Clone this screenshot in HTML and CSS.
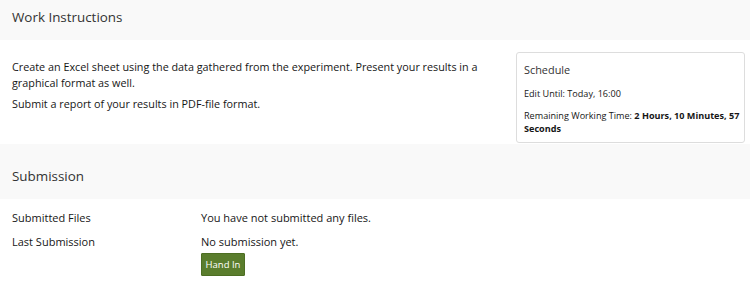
FILE: index.html
```html
<!DOCTYPE html>
<html lang="en">

<head>
    <meta charset="UTF-8">
    <title>Exercise</title>
    <link rel="stylesheet" href="styles.css">
</head>

<body>
    <section class="panel">
        <h2 class="panel-title">Work Instructions</h2>
        <div class="panel-body instructions">
            <div class="instructions-text">
                <p>Create an Excel sheet using the data gathered from the experiment. Present your results in a graphical format as well.</p>
                <p>Submit a report of your results in PDF-file format.</p>
            </div>
            <aside class="schedule">
                <h3>Schedule</h3>
                <p>Edit Until: Today, 16:00</p>
                <p>Remaining Working Time: <strong>2 Hours, 10 Minutes, 57 Seconds</strong></p>
            </aside>
        </div>
    </section>

    <section class="panel">
        <h2 class="panel-title">Submission</h2>
        <div class="panel-body submission">
            <div class="form-row">
                <div class="form-label">Submitted Files</div>
                <div class="form-value">You have not submitted any files.</div>
            </div>
            <div class="form-row">
                <div class="form-label">Last Submission</div>
                <div class="form-value">No submission yet.</div>
            </div>
            <div class="form-row">
                <div class="form-label"></div>
                <div class="form-value"><button class="btn-handin">Hand In</button></div>
            </div>
        </div>
    </section>
</body>

</html>
```

FILE: styles.css
```css
* {
    margin: 0;
    padding: 0;
    box-sizing: border-box;
}

body {
    font-family: 'Open Sans', 'Noto Sans', sans-serif;
    font-size: 11px;
    color: #161616;
    background-color: #fff;
}

.panel + .panel {
    border-top: 15px solid #f9f9f9;
}

.panel-title {
    background-color: #f9f9f9;
    font-size: 13.4px;
    font-weight: 400;
    color: #333;
    padding: 0 12px;
    height: 40px;
    line-height: 35px;
}

.instructions {
    display: flex;
    align-items: flex-start;
    gap: 14px;
    padding: 12px 5px 1px 12px;
}

.instructions-text {
    flex: 1;
    font-size: 10.8px;
    padding-top: 7px;
}

.instructions-text p {
    line-height: 16px;
    margin-bottom: 5px;
}

.schedule {
    flex: 0 0 229px;
    border: 1px solid #dddddd;
    border-radius: 3px;
    padding: 10px 4px 7px 7px;
    font-size: 9.1px;
    line-height: 13px;
}

.schedule h3 {
    font-size: 10.9px;
    font-weight: 400;
    color: #333;
    margin-bottom: 11px;
}

.schedule p {
    margin-bottom: 9px;
}

.schedule p:last-child {
    margin-bottom: 0;
}

.submission {
    padding: 11px 12px 14px;
}

.form-row {
    display: flex;
    line-height: 16px;
    margin-bottom: 8px;
}

.form-row:last-child {
    margin-bottom: 0;
}

.form-label {
    width: 189px;
}

.btn-handin {
    display: block;
    margin-top: -5px;
    background-color: #5a7d2d;
    color: #fff;
    border: 1px solid #4d6e23;
    border-radius: 1px;
    font-family: 'Open Sans', 'Noto Sans', sans-serif;
    font-size: 9.5px;
    white-space: nowrap;
    height: 23px;
    width: 44px;
    cursor: pointer;
}
```
